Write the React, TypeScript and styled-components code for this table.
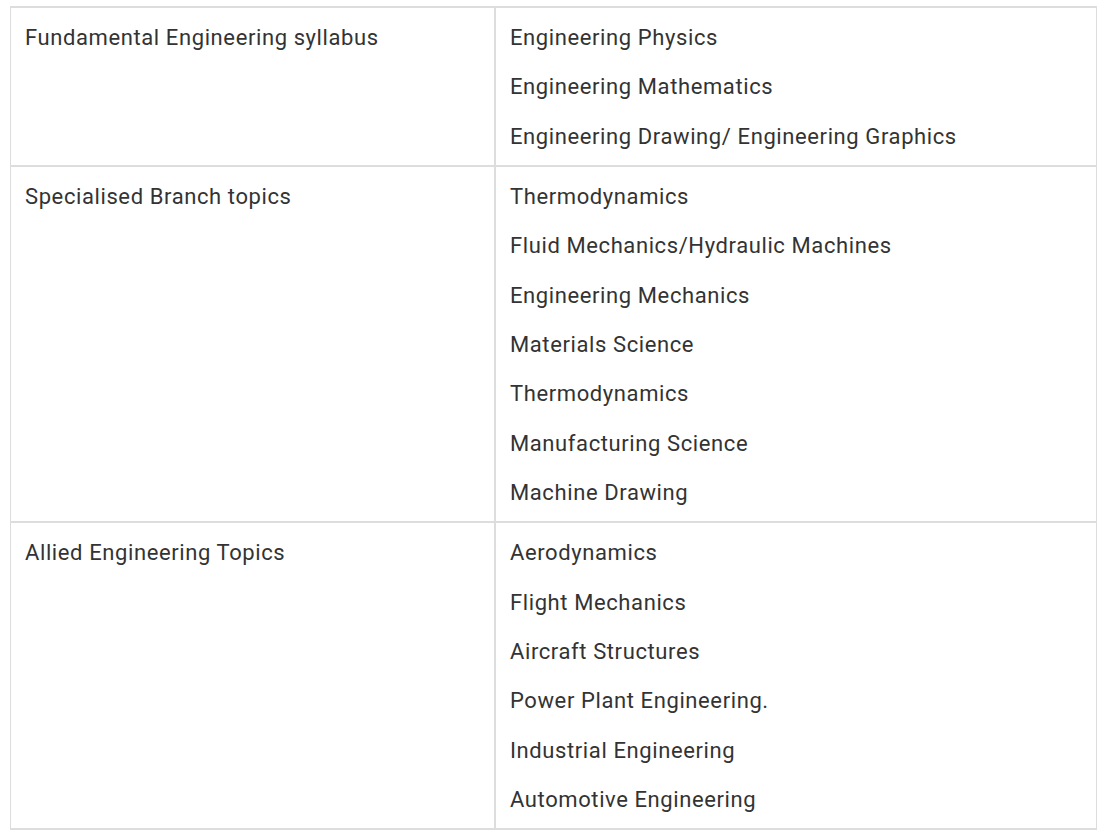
import React from "react";
import styled, { createGlobalStyle } from "styled-components";

const Global = createGlobalStyle`
  html, body { margin: 0; padding: 0; background: #fff; }
  body { font-family: Roboto, "Liberation Sans", Arial, sans-serif; }
`;

const Page = styled.div`
  padding: 6px 7px 0 10px;
`;

const Table = styled.table`
  width: 1087px;
  border-collapse: separate;
  border-spacing: 0;
  border: 1px solid #dddddd;
  color: #333333;
  font-size: 22px;
  letter-spacing: 0.6px;
`;

const Cell = styled.td<{ $first?: boolean; $wide?: boolean }>`
  vertical-align: top;
  padding: 15px 15px 13px 14px;
  border-top: 1px solid #dddddd;
  border-bottom: 1px solid #dddddd;
  border-left: ${(p) => (p.$first ? "none" : "2px solid #dddddd")};
  width: ${(p) => (p.$wide ? "454px" : "auto")};
`;

const List = styled.div`
  display: flex;
  flex-direction: column;
  gap: 19.4px;
`;

const Item = styled.div`
  line-height: 30px;
  white-space: nowrap;
`;

const rows: { title: string; items: string[] }[] = [
  {
    title: "Fundamental Engineering syllabus",
    items: [
      "Engineering Physics",
      "Engineering Mathematics",
      "Engineering Drawing/ Engineering Graphics",
    ],
  },
  {
    title: "Specialised Branch topics",
    items: [
      "Thermodynamics",
      "Fluid Mechanics/Hydraulic Machines",
      "Engineering Mechanics",
      "Materials Science",
      "Thermodynamics",
      "Manufacturing Science",
      "Machine Drawing",
    ],
  },
  {
    title: "Allied Engineering Topics",
    items: [
      "Aerodynamics",
      "Flight Mechanics",
      "Aircraft Structures",
      "Power Plant Engineering.",
      "Industrial Engineering",
      "Automotive Engineering",
    ],
  },
];

export default function App() {
  return (
    <>
      <Global />
      <Page>
        <Table>
          <tbody>
            {rows.map((r, i) => (
              <tr key={i}>
                <Cell $first $wide>
                  <Item>{r.title}</Item>
                </Cell>
                <Cell>
                  <List>
                    {r.items.map((it, j) => (
                      <Item key={j}>{it}</Item>
                    ))}
                  </List>
                </Cell>
              </tr>
            ))}
          </tbody>
        </Table>
      </Page>
    </>
  );
}
